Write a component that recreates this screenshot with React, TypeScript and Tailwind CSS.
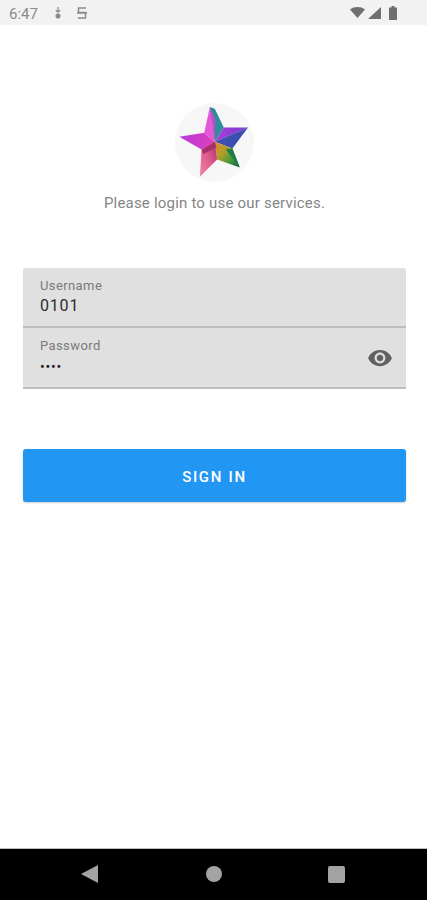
// zoomed star, facets painted back to front
function StarLogo() {
    return (
        <svg viewBox="45 38 238 238" className="h-[79px] w-[79px] blur-[0.6px]">
            <defs>
                <linearGradient id="topFacet" x1="0" y1="0" x2="1" y2="0">
                    <stop offset="0" stopColor="#a83cd8" />
                    <stop offset="1" stopColor="#7c3cd0" />
                </linearGradient>
                <linearGradient id="rightFacet" x1="0" y1="0" x2="1" y2="1">
                    <stop offset="0" stopColor="#e8882c" />
                    <stop offset="0.4" stopColor="#a8a028" />
                    <stop offset="0.7" stopColor="#3f9438" />
                    <stop offset="1" stopColor="#185c48" />
                </linearGradient>
                <linearGradient id="bottomFacet" x1="1" y1="0" x2="0" y2="1">
                    <stop offset="0" stopColor="#a83068" />
                    <stop offset="0.5" stopColor="#e05c90" />
                    <stop offset="1" stopColor="#ee84a4" />
                </linearGradient>
                <linearGradient id="leftFacet" x1="0" y1="0" x2="1" y2="0">
                    <stop offset="0" stopColor="#b838e0" />
                    <stop offset="1" stopColor="#e040b8" />
                </linearGradient>
            </defs>
            <polygon points="150,50 133,128 165,155" fill="#e458d8" />
            <polygon points="150,50 165,55 192,112 165,155" fill="#2f8f98" />
            <polygon points="150,50 165,155 166,88" fill="#c848cc" />
            <polygon points="58,140 133,128 165,155 125,178" fill="url(#leftFacet)" />
            <polygon points="265,112 192,112 165,155" fill="url(#topFacet)" />
            <polygon points="265,112 165,155 218,175" fill="#3c4fb0" />
            <polygon points="165,155 218,175 240,232 172,208" fill="url(#rightFacet)" />
            <polygon points="218,175 240,232 198,178" fill="#1f7a4c" />
            <polygon points="125,178 165,155 172,208 120,260" fill="url(#bottomFacet)" />
            <polygon points="125,178 165,155 170,172 130,192" fill="#a8306c" />
        </svg>
    );
}

function StatusBar() {
    return (
        <div className="flex h-[25px] items-center justify-between bg-[#f2f2f2] pl-[9px] pr-[30px] text-[#8a8a8a]">
            <div className="flex items-center">
                <span className="pt-[2px] text-[15px] leading-[20px]">6:47</span>
                <svg viewBox="0 0 12 14" className="ml-[14px] h-[14px] w-[12px]" fill="none" stroke="#8a8a8a">
                    <path d="M6 1v5M3.8 4.2 6 6.2l2.2-2" strokeWidth="1.2" />
                    <circle cx="6" cy="10" r="2.2" fill="#8a8a8a" strokeWidth="0.8" />
                </svg>
                <svg viewBox="0 0 12 14" className="ml-[12px] h-[14px] w-[12px]" fill="none" stroke="#8a8a8a" strokeWidth="1.5">
                    <path d="M10 2H2.5v4.5h7V12H2M1 7h10" />
                </svg>
            </div>
            <div className="flex items-center">
                <svg viewBox="0 0 15 11" className="h-[11px] w-[15px]" fill="#6f6f6f">
                    <path d="M0 2.5C4-.8 11-.8 15 2.5L7.5 11z" />
                </svg>
                <svg viewBox="0 0 13 12" className="ml-[3px] h-[12px] w-[13px]" fill="#6f6f6f">
                    <path d="M13 0v12H0z" />
                </svg>
                <svg viewBox="0 0 8 14" className="ml-[8px] h-[14px] w-[8px]" fill="#6f6f6f">
                    <path d="M2.5 0h3v1.5H8V14H0V1.5h2.5z" />
                </svg>
            </div>
        </div>
    );
}

function NavBar() {
    return (
        <div className="flex h-[52px] items-center justify-between border-t border-[#bdbdbd] bg-black pb-[1px] pl-[81px] pr-[82px]">
            <svg viewBox="0 0 17 18" className="h-[18px] w-[17px]" fill="#a3a3a3">
                <path d="M17 0v18L0 9z" />
            </svg>
            <div className="ml-[2px] h-4 w-4 rounded-full bg-[#a3a3a3]" />
            <div className="h-[17px] w-[17px] rounded-[2px] bg-[#a3a3a3]" />
        </div>
    );
}

export default function App() {
    return (
        <div className="flex h-[900px] w-[427px] flex-col bg-white font-['Roboto',sans-serif]">
            <StatusBar />
            <main className="flex flex-1 flex-col pl-[23px] pr-[21px]">
                <div className="mt-[78px] flex flex-col items-center">
                    <div className="h-[79px] w-[79px] rounded-full bg-[#f7f7f7]">
                        <StarLogo />
                    </div>
                    <p className="mt-[11px] text-[15px] leading-[20px] tracking-[0.2px] text-[#858585]">
                        Please login to use our services.
                    </p>
                </div>

                <div className="mt-[55px] flex flex-col">
                    <div className="h-[60px] rounded-t-[3px] border-b-2 border-[#bdbdbd] bg-[#e0e0e0] px-[17px] pt-[10px]">
                        <div className="text-[13px] leading-[15px] tracking-[0.4px] text-[#7a7a7a]">Username</div>
                        <div className="mt-[2px] text-[16px] leading-[22px] tracking-[0.8px] text-[#2b2b2b]">0101</div>
                    </div>
                    <div className="flex h-[61px] items-center justify-between border-b-2 border-[#bdbdbd] bg-[#e0e0e0] pl-[17px] pr-[13px]">
                        <div className="self-start pt-[10px]">
                            <div className="text-[13px] leading-[15px] tracking-[0.4px] text-[#7a7a7a]">Password</div>
                            <div className="mt-[4px] text-[14px] leading-[20px] tracking-[0.8px] text-[#1f1f1f]">••••</div>
                        </div>
                        <svg viewBox="0 0 24 24" className="h-[26px] w-[26px]" fill="#616161">
                            <path d="M12 4.5C7 4.5 2.73 7.61 1 12c1.73 4.39 6 7.5 11 7.5s9.27-3.11 11-7.5c-1.73-4.39-6-7.5-11-7.5zM12 17c-2.76 0-5-2.24-5-5s2.24-5 5-5 5 2.24 5 5-2.24 5-5 5zm0-8c-1.66 0-3 1.34-3 3s1.34 3 3 3 3-1.34 3-3-1.34-3-3-3z" />
                        </svg>
                    </div>
                </div>

                <button className="mt-[60px] h-[53px] rounded-[3px] bg-[#2196f3] pt-[3px] text-[15px] font-medium tracking-[1.7px] text-white shadow-[0_1px_2px_rgba(0,0,0,0.2)]">
                    SIGN IN
                </button>
            </main>
            <NavBar />
        </div>
    );
}
